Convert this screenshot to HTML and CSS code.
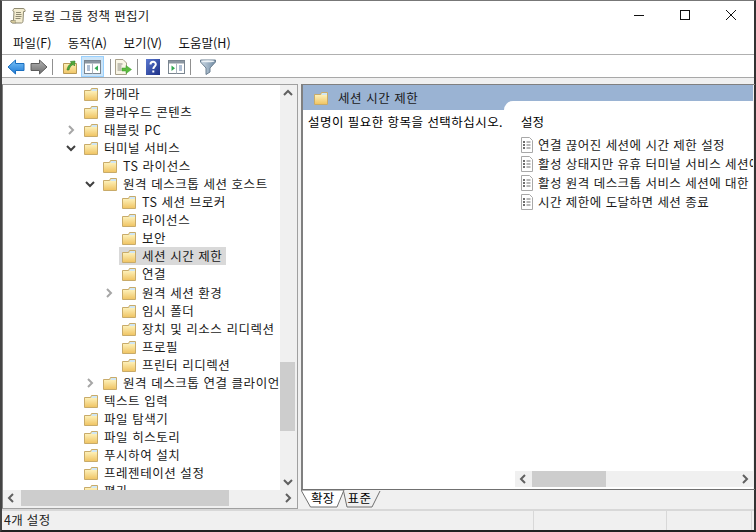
FILE: index.html
```html
<!DOCTYPE html>
<html lang="ko">
<head>
<meta charset="utf-8">
<title>로컬 그룹 정책 편집기</title>
<link rel="stylesheet" href="styles.css">
</head>
<body>
<svg class="defs" width="0" height="0" aria-hidden="true">
  <defs>
    <linearGradient id="fg" x1="0" y1="0" x2="0" y2="1"><stop offset="0" stop-color="#fdf0b8"/><stop offset="1" stop-color="#f0c565"/></linearGradient>
    <linearGradient id="bl" x1="0" y1="0" x2="0" y2="1"><stop offset="0" stop-color="#7cc4f8"/><stop offset="1" stop-color="#1c78d4"/></linearGradient>
    <linearGradient id="gr" x1="0" y1="0" x2="0" y2="1"><stop offset="0" stop-color="#b4b4b4"/><stop offset="1" stop-color="#6c6c6c"/></linearGradient>
    <linearGradient id="hp" x1="0" y1="0" x2="1" y2="1"><stop offset="0" stop-color="#5a78d0"/><stop offset="1" stop-color="#1c2f86"/></linearGradient>
    <linearGradient id="fl" x1="0" y1="0" x2="1" y2="0"><stop offset="0" stop-color="#cfdbe6"/><stop offset="1" stop-color="#6f8aa3"/></linearGradient>
    <symbol id="folder" viewBox="0 0 16 16">
      <path d="M1.500 4.500V14.500H14.500V2.500H8.500L7.500 4.500Z" fill="#f6dd94" stroke="#c8ab6a"/>
      <path d="M9 3H14V5H8.300Z" fill="#cfe6f5"/>
      <rect x="2" y="5" width="12" height="9" fill="url(#fg)"/>
    </symbol>
    <symbol id="doc" viewBox="0 0 14 16">
      <path d="M1.500 .5H9.500L12.500 3.500V15.500H1.500Z" fill="#fff" stroke="#a8a8a8"/>
      <path d="M3 5h2M3 8h2M3 11h2" stroke="#404040" stroke-width="1.400"/>
      <path d="M6.500 5h4M6.500 8h4M6.500 11h4" stroke="#707070"/>
    </symbol>
    <symbol id="chev-r" viewBox="0 0 10 10"><path d="M3 1L7 5L3 9" fill="none" stroke="#a6a6a6" stroke-width="2"/></symbol>
    <symbol id="chev-d" viewBox="0 0 10 10"><path d="M1 3L5 7L9 3" fill="none" stroke="#404040" stroke-width="2"/></symbol>
    <symbol id="sb-u" viewBox="0 0 10 10"><path d="M1 7L5 3L9 7" fill="none" stroke="#606060" stroke-width="2"/></symbol>
    <symbol id="sb-d" viewBox="0 0 10 10"><path d="M1 3L5 7L9 3" fill="none" stroke="#606060" stroke-width="2"/></symbol>
    <symbol id="sb-l" viewBox="0 0 10 10"><path d="M7 1L3 5L7 9" fill="none" stroke="#606060" stroke-width="2"/></symbol>
    <symbol id="sb-r" viewBox="0 0 10 10"><path d="M3 1L7 5L3 9" fill="none" stroke="#606060" stroke-width="2"/></symbol>
  </defs>
</svg>

<div class="window">
  <header class="titlebar">
    <svg class="app-icon" width="16" height="16" viewBox="0 0 16 16"><path d="M3.500 1.500C2.500 1.500 2.500 3.500 4 3.500L3.500 12.500H1C.5 14 1.500 15 3 15H11.500C12.500 15 13 14 13 13L13.500 3.500H15C15.500 2 14.500 .5 13 .5H4Z" fill="#f3eccf" stroke="#8f8a72"/><path d="M6 4.500h5M6 6.500h5.500M5.500 8.500h6M5.500 10.500h5" stroke="#8f8a72"/><path d="M1 12.500H5.500C5 13.500 5.500 14.500 6 15H3C1.500 15 .5 14 1 12.500Z" fill="#d9cc9c" stroke="#8f8a72" stroke-width=".6"/></svg>
    <span class="title-text">로컬 그룹 정책 편집기</span>
    <div class="win-controls">
      <svg class="win-btn" width="46" height="20" viewBox="0 0 46 20"><path d="M18 10.500H28" stroke="#111"/></svg>
      <svg class="win-btn" width="46" height="20" viewBox="0 0 46 20"><rect x="18.500" y="5.500" width="9" height="9" fill="none" stroke="#111"/></svg>
      <svg class="win-btn" width="46" height="20" viewBox="0 0 46 20"><path d="M18 5L28 15M28 5L18 15" stroke="#111"/></svg>
    </div>
  </header>

  <nav class="menubar">
    <span class="menu-item">파일(F)</span>
    <span class="menu-item">동작(A)</span>
    <span class="menu-item">보기(V)</span>
    <span class="menu-item">도움말(H)</span>
  </nav>

  <div class="toolbar">
    <span class="tool"><svg width="18" height="16" viewBox="0 0 18 16"><path d="M1 8L8.500 1V4.500H17V11.500H8.500V15Z" fill="url(#bl)" stroke="#1a6fc0"/></svg></span>
    <span class="tool"><svg width="18" height="16" viewBox="0 0 18 16"><path d="M17 8L9.500 1V4.500H1V11.500H9.500V15Z" fill="url(#gr)" stroke="#5c5c5c"/></svg></span>
    <span class="sep sep-a"></span>
    <span class="tool"><svg width="16" height="16" viewBox="0 0 16 16"><path d="M1.500 4.500V14.500H14.500V4.500Z" fill="url(#fg)" stroke="#b89a58"/><path d="M5 11C5.500 7.500 7 5.500 9.500 4.500L8.500 2.500L13 2L12.500 7L11 5.500C9 6.500 7.500 8.500 7 11Z" fill="#4fa83a" stroke="#2f7d24" stroke-width=".6"/></svg></span>
    <span class="tool tool-on"><svg width="17" height="14" viewBox="0 0 17 14"><rect x=".5" y=".5" width="16" height="13" fill="#fff" stroke="#7a8590"/><rect x="1" y="1" width="15" height="2.500" fill="#8b96a1"/><path d="M3 6h3M3 8h3M3 10h3" stroke="#5f7fa8"/><path d="M8.500 3.500V13.500" stroke="#a9b4be"/><path d="M14 5.500V11L10.500 8.200Z" fill="#2fa84f"/></svg></span>
    <span class="sep sep-b"></span>
    <span class="tool tool-w"><svg width="18" height="16" viewBox="0 0 18 16"><path d="M1.500 .5H9L12.500 4V15.500H1.500Z" fill="#faf6e6" stroke="#a8a08a"/><path d="M3.500 5h5M3.500 7h4M3.500 9h4M3.500 11h4" stroke="#8a8a80"/><path d="M8 9H12V6.500L17.500 10.500L12 14.500V12H8Z" fill="#5cbb3f" stroke="#3a9a2a" stroke-width=".5"/></svg></span>
    <span class="sep sep-c"></span>
    <span class="tool"><svg width="14" height="16" viewBox="0 0 14 16"><rect width="14" height="16" fill="url(#hp)"/><path d="M4.500 5.500C4.500 2 9.800 2 9.800 5.300C9.800 7.500 7.300 7.500 7.300 10M7.300 11.500V13.500" fill="none" stroke="#fff" stroke-width="2"/></svg></span>
    <span class="tool tool-w"><svg width="17" height="14" viewBox="0 0 17 14"><rect x=".5" y=".5" width="16" height="13" fill="#fff" stroke="#7a8590"/><rect x="1" y="1" width="15" height="2.500" fill="#8b96a1"/><path d="M11 6h3M11 8h3M11 10h3" stroke="#5f7fa8"/><path d="M8.500 3.500V13.500" stroke="#a9b4be"/><path d="M3.500 5.500V11L7 8.200Z" fill="#2fa84f"/></svg></span>
    <span class="sep sep-d"></span>
    <span class="tool tool-w"><svg width="16" height="16" viewBox="0 0 16 16"><path d="M.5 1H15.500V3L10 9V13L6 15.500V9L.5 3Z" fill="url(#fl)" stroke="#6d8092"/><ellipse cx="8" cy="2.200" rx="6.500" ry="1" fill="#eef3f7"/></svg></span>
  </div>

  <main class="panes">
    <section class="tree-pane">
      <div class="tree">
        <div class="row l0"><span class="slot"></span><span class="item"><svg class="fld"><use href="#folder"/></svg><span class="label">카메라</span></span></div>
        <div class="row l0"><span class="slot"></span><span class="item"><svg class="fld"><use href="#folder"/></svg><span class="label">클라우드 콘텐츠</span></span></div>
        <div class="row l0"><span class="slot"><svg class="chev"><use href="#chev-r"/></svg></span><span class="item"><svg class="fld"><use href="#folder"/></svg><span class="label">태블릿 PC</span></span></div>
        <div class="row l0"><span class="slot"><svg class="chev"><use href="#chev-d"/></svg></span><span class="item"><svg class="fld"><use href="#folder"/></svg><span class="label">터미널 서비스</span></span></div>
        <div class="row l1"><span class="slot"></span><span class="item"><svg class="fld"><use href="#folder"/></svg><span class="label">TS 라이선스</span></span></div>
        <div class="row l1"><span class="slot"><svg class="chev"><use href="#chev-d"/></svg></span><span class="item"><svg class="fld"><use href="#folder"/></svg><span class="label">원격 데스크톱 세션 호스트</span></span></div>
        <div class="row l2"><span class="slot"></span><span class="item"><svg class="fld"><use href="#folder"/></svg><span class="label">TS 세션 브로커</span></span></div>
        <div class="row l2"><span class="slot"></span><span class="item"><svg class="fld"><use href="#folder"/></svg><span class="label">라이선스</span></span></div>
        <div class="row l2"><span class="slot"></span><span class="item"><svg class="fld"><use href="#folder"/></svg><span class="label">보안</span></span></div>
        <div class="row l2"><span class="slot"></span><span class="item selected"><svg class="fld"><use href="#folder"/></svg><span class="label">세션 시간 제한</span></span></div>
        <div class="row l2"><span class="slot"></span><span class="item"><svg class="fld"><use href="#folder"/></svg><span class="label">연결</span></span></div>
        <div class="row l2"><span class="slot"><svg class="chev"><use href="#chev-r"/></svg></span><span class="item"><svg class="fld"><use href="#folder"/></svg><span class="label">원격 세션 환경</span></span></div>
        <div class="row l2"><span class="slot"></span><span class="item"><svg class="fld"><use href="#folder"/></svg><span class="label">임시 폴더</span></span></div>
        <div class="row l2"><span class="slot"></span><span class="item"><svg class="fld"><use href="#folder"/></svg><span class="label">장치 및 리소스 리디렉션</span></span></div>
        <div class="row l2"><span class="slot"></span><span class="item"><svg class="fld"><use href="#folder"/></svg><span class="label">프로필</span></span></div>
        <div class="row l2"><span class="slot"></span><span class="item"><svg class="fld"><use href="#folder"/></svg><span class="label">프린터 리디렉션</span></span></div>
        <div class="row l1"><span class="slot"><svg class="chev"><use href="#chev-r"/></svg></span><span class="item"><svg class="fld"><use href="#folder"/></svg><span class="label">원격 데스크톱 연결 클라이언트</span></span></div>
        <div class="row l0"><span class="slot"></span><span class="item"><svg class="fld"><use href="#folder"/></svg><span class="label">텍스트 입력</span></span></div>
        <div class="row l0"><span class="slot"></span><span class="item"><svg class="fld"><use href="#folder"/></svg><span class="label">파일 탐색기</span></span></div>
        <div class="row l0"><span class="slot"></span><span class="item"><svg class="fld"><use href="#folder"/></svg><span class="label">파일 히스토리</span></span></div>
        <div class="row l0"><span class="slot"></span><span class="item"><svg class="fld"><use href="#folder"/></svg><span class="label">푸시하여 설치</span></span></div>
        <div class="row l0"><span class="slot"></span><span class="item"><svg class="fld"><use href="#folder"/></svg><span class="label">프레젠테이션 설정</span></span></div>
        <div class="row l0"><span class="slot"></span><span class="item"><svg class="fld"><use href="#folder"/></svg><span class="label">평가</span></span></div>
      </div>
      <div class="vscroll">
        <svg class="arrow"><use href="#sb-u"/></svg>
        <div class="vtrack"><div class="vthumb"></div></div>
        <svg class="arrow"><use href="#sb-d"/></svg>
      </div>
      <div class="hscroll tree-h">
        <svg class="arrow"><use href="#sb-l"/></svg>
        <div class="htrack"><div class="hthumb tree-thumb"></div></div>
        <svg class="arrow"><use href="#sb-r"/></svg>
      </div>
    </section>

    <section class="detail-pane">
      <div class="detail">
        <div class="desc-col">
          <div class="detail-head"><svg class="fld"><use href="#folder"/></svg><span class="head-text">세션 시간 제한</span></div>
          <p class="desc">설명이 필요한 항목을 선택하십시오.</p>
        </div>
        <div class="list-col">
          <div class="list">
            <div class="list-head">설정</div>
            <div class="list-rows">
              <div class="list-row"><svg class="doc"><use href="#doc"/></svg><span>연결 끊어진 세션에 시간 제한 설정</span></div>
              <div class="list-row"><svg class="doc"><use href="#doc"/></svg><span>활성 상태지만 유휴 터미널 서비스 세션에 대한 시간 제한 설정</span></div>
              <div class="list-row"><svg class="doc"><use href="#doc"/></svg><span>활성 원격 데스크톱 서비스 세션에 대한 시간 제한 설정</span></div>
              <div class="list-row"><svg class="doc"><use href="#doc"/></svg><span>시간 제한에 도달하면 세션 종료</span></div>
            </div>
            <div class="hscroll list-h">
              <svg class="arrow"><use href="#sb-l"/></svg>
              <div class="htrack"><div class="hthumb list-thumb"></div></div>
              <svg class="arrow"><use href="#sb-r"/></svg>
            </div>
          </div>
        </div>
      </div>
      <div class="tabs">
        <svg class="tab-shape" width="84" height="18" viewBox="0 0 84 18"><path d="M42.500 1L46 17H71L79 1" fill="#f0f0f0" stroke="#707070"/><path d="M0 0L9.500 17H36L43 0Z" fill="#fff" stroke="#707070"/></svg>
        <span class="tab tab-a">확장</span>
        <span class="tab tab-b">표준</span>
      </div>
    </section>
  </main>

  <footer class="status">
    <span class="st st-a">4개 설정</span>
    <span class="st st-b"></span>
    <span class="st st-c"></span>
  </footer>
</div>
</body>
</html>
```
FILE: styles.css
```css
* { box-sizing: border-box; }
html, body { margin: 0; padding: 0; background: #f0f0f0; }
body { width: 756px; height: 532px; overflow: hidden; font-family: "Noto Sans CJK KR", "Noto Sans", sans-serif; font-size: 12px; color: #000; }
.defs { position: absolute; }
svg { display: block; flex: none; }

.window { width: 756px; height: 532px; display: flex; flex-direction: column; border-top: 1px solid #777; border-left: 2px solid #444; border-right: 2px solid #333; border-bottom: 2px solid #222; background: #f0f0f0; }

.titlebar { height: 29px; flex: none; display: flex; align-items: center; background: #fff; padding-left: 8px; }
.app-icon { margin-top: 1px; }
.title-text { margin-left: 6px; font-size: 12.500px; letter-spacing: .3px; color: #222; line-height: 29px; }
.win-controls { margin-left: auto; display: flex; margin-top: -1px; }

.menubar { height: 25px; flex: none; display: flex; background: #fff; border-bottom: 1px solid #b0b0b0; padding: 1px 0 0 11px; align-items: center; line-height: 23px; }
.menu-item { font-size: 12.500px; color: #111; margin-right: 16.500px; }

.toolbar { height: 23px; flex: none; display: flex; align-items: center; background: #fff; border-bottom: 1px solid #a8a8a8; padding-left: 2px; }
.tool { width: 23px; height: 21px; margin-top: 1px; display: flex; align-items: center; justify-content: center; }
.tool-w { width: 24px; }
.tool-on { background: #cce4f7; box-shadow: inset 0 0 0 1px #99d1ff; }
.sep { width: 1px; height: 16px; margin-top: 1px; background: #909090; flex: none; }
.sep-a { margin: 1px 5px 0 2px; }
.sep-b { margin: 1px 0 0 6px; }
.sep-c { margin: 1px 3px 0 2px; }
.sep-d { margin: 1px 5px 0 2px; }

.panes { flex: 1; min-height: 0; margin-top: 6px; display: flex; }

.tree-pane { width: 296px; flex: none; display: grid; grid-template-columns: 277px 16px; grid-template-rows: 405px 17px; border: 1px solid #a0a0a0; border-left-color: #808080; background: #f0f0f0; padding-right: 1px; }
.tree { background: #fff; overflow: hidden; }
.row { height: 18.050px; display: flex; align-items: center; white-space: nowrap; }
.l0 { padding-left: 62px; }
.l1 { padding-left: 81px; }
.l2 { padding-left: 100px; }
.slot { width: 16px; height: 18px; flex: none; display: flex; align-items: center; justify-content: flex-start; padding-left: 1px; }
.chev { width: 10px; height: 10px; }
.item { display: flex; align-items: center; height: 18px; padding: 0 4px 0 2px; }
.selected { background: #d9d9d9; }
.fld { width: 16px; height: 16px; }
.label { margin-left: 5px; font-size: 12.500px; letter-spacing: .55px; color: #1a1a1a; line-height: 18px; }

.vscroll { display: flex; flex-direction: column; align-items: center; background: #f0f0f0; grid-row: 1; grid-column: 2; }
.arrow { width: 16px; height: 16px; padding: 3px; flex: none; }
.vtrack { flex: 1; width: 100%; padding-top: 261px; }
.vthumb { width: 15px; height: 69px; background: #cdcdcd; }

.hscroll { display: flex; align-items: center; background: #f0f0f0; height: 16px; }
.tree-h { grid-column: 1 / 3; grid-row: 2; }
.htrack { flex: 1; height: 100%; min-width: 0; padding-left: 2px; }
.hthumb { height: 100%; background: #cdcdcd; }
.tree-thumb { width: 208px; }
.list-thumb { width: 74px; margin-left: -1px; }

.detail-pane { width: 452px; margin-left: 3px; flex: none; display: flex; flex-direction: column; }
.detail { height: 406px; flex: none; display: flex; border-top: 1px solid #808080; border-left: 2px solid #808080; border-bottom: 1px solid #707070; margin-right: -2px; padding-right: 2px; }
.desc-col { width: 201px; flex: none; background: #fff; display: flex; flex-direction: column; }
.detail-head { height: 25px; flex: none; display: flex; align-items: center; background: #9ab3d3; padding-left: 10px; }
.head-text { margin-left: 9px; font-size: 12.500px; letter-spacing: .55px; color: #1a1a1a; margin-top: -1px; }
.desc { margin: 0; padding: 3px 0 0 5px; font-size: 12.500px; letter-spacing: .45px; line-height: 18px; white-space: nowrap; overflow: hidden; }
.list-col { flex: 1; min-width: 0; background: linear-gradient(#9ab3d3 25px, #fff 25px); padding-top: 16px; }
.list { height: 388px; background: #fff; border-top-left-radius: 9px; display: flex; flex-direction: column; position: relative; padding-top: 12px; }
.list-head { height: 18px; padding-left: 17px; font-size: 12.500px; line-height: 18px; flex: none; }
.list-rows { flex: 1; min-height: 0; padding: 4px 0 0 16px; overflow: hidden; }
.list-row { height: 19px; display: flex; align-items: center; white-space: nowrap; font-size: 12.500px; letter-spacing: .45px; color: #1a1a1a; }
.doc { width: 14px; height: 16px; margin-right: 4px; }
.list-h { margin-left: 11px; flex: none; margin-bottom: 2px; }

.tabs { flex: 1; min-height: 0; position: relative; display: flex; padding-left: 10px; }
.tab-shape { position: absolute; left: 0; top: 0; }
.tab { position: relative; font-size: 12.500px; letter-spacing: .3px; line-height: 16px; }
.tab-b { margin-left: 13px; }

.status { height: 21px; flex: none; display: flex; border-top: 2px solid #d8d8d8; }
.st { border-right: 1px solid #d8d8d8; font-size: 12.500px; letter-spacing: .3px; line-height: 18px; color: #222; }
.st-a { width: 532px; padding-left: 2px; }
.st-b { width: 133px; }
.st-c { width: 85px; }
```
